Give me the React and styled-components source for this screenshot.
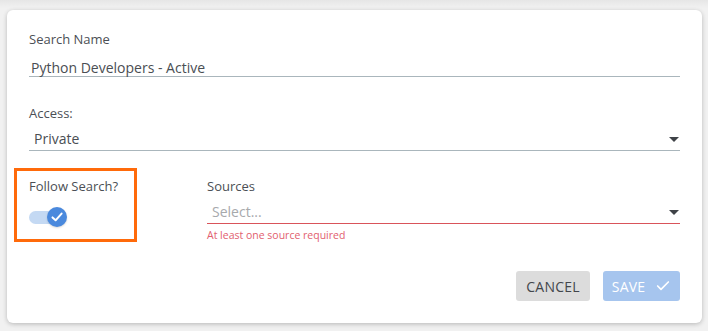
import React from "react";
import styled, { createGlobalStyle } from "styled-components";
import { Check } from "lucide-react";

const GlobalStyle = createGlobalStyle`
  html, body {
    margin: 0;
    padding: 0;
  }
  body {
    background: linear-gradient(#e6e6e6, #f1f1f1 8px) #f1f1f1;
    font-family: "Open Sans", "Liberation Sans", sans-serif;
  }
`;

const Card = styled.div`
  box-sizing: border-box;
  width: 695px;
  margin: 10px 6px 8px 7px;
  padding: 21px 22px 22px 22px;
  background: #fff;
  border-radius: 6px;
  box-shadow: 0 1px 4px rgba(0, 0, 0, 0.18), 0 2px 6px rgba(0, 0, 0, 0.06);
`;

const Field = styled.div`
  display: flex;
  flex-direction: column;
  margin-bottom: ${(p) => p.$gap || 0}px;
`;

const Label = styled.label`
  font-size: 13px;
  line-height: 16px;
  color: #4b4f55;
`;

const TextInput = styled.div`
  margin-top: 12px;
  padding-left: 2px;
  font-size: 14px;
  line-height: 17px;
  color: #4a4e53;
  border-bottom: 1px solid #aab6bc;
`;

const Select = styled.div`
  position: relative;
  margin-top: 8px;
  padding: 0 0 1px 5px;
  font-size: 14px;
  line-height: 20px;
  color: ${(p) => (p.$placeholder ? "#a7a9ac" : "#4a4e53")};
  border-bottom: 1px solid ${(p) => (p.$error ? "#d9545a" : "#aab6bc")};

  &::after {
    content: "";
    position: absolute;
    right: 1px;
    top: 8px;
    border-left: 5px solid transparent;
    border-right: 5px solid transparent;
    border-top: 5px solid #3f4247;
  }
`;

const ErrorText = styled.div`
  margin-top: 4px;
  font-size: 10.5px;
  line-height: 14px;
  color: #e2606e;
`;

const Row = styled.div`
  display: flex;
  align-items: flex-start;
  margin-top: 17px;
`;

const Highlight = styled.div`
  box-sizing: border-box;
  width: 123px;
  margin-left: -15px;
  padding: 7px 12px 12px 12px;
  border: 3px solid #ff6a0a;
  display: flex;
  flex-direction: column;
  gap: 13px;
`;

const Sources = styled.div`
  flex: 1;
  margin-left: 70px;
  padding-top: 10px;
  display: flex;
  flex-direction: column;
`;

const Switch = styled.div`
  position: relative;
  width: 34px;
  height: 20px;
  display: flex;
  align-items: center;
`;

const Track = styled.div`
  width: 32px;
  height: 13px;
  border-radius: 7px;
  background: #c4d9f3;
`;

const Knob = styled.div`
  position: absolute;
  left: 18px;
  top: 0;
  width: 20px;
  height: 20px;
  border-radius: 50%;
  background: #4a89dd;
  display: flex;
  align-items: center;
  justify-content: center;
  box-shadow: 0 1px 2px rgba(0, 0, 0, 0.15);
`;

const Actions = styled.div`
  display: flex;
  justify-content: flex-end;
  gap: 13px;
  margin-top: 29px;
`;

const Button = styled.button`
  box-sizing: border-box;
  height: 30px;
  width: ${(p) => p.$w}px;
  display: flex;
  align-items: center;
  justify-content: center;
  gap: 10px;
  border: none;
  border-radius: 3px;
  font-family: "Open Sans", "Liberation Sans", sans-serif;
  font-size: 14px;
  letter-spacing: 0.2px;
  text-transform: uppercase;
  background: ${(p) => (p.$primary ? "#a6c5ee" : "#dcdcdc")};
  color: ${(p) => (p.$primary ? "#ffffff" : "#43464b")};
  padding: 0;
`;

export default function App() {
  return (
    <>
      <GlobalStyle />
      <Card>
        <Field $gap={28}>
          <Label>Search Name</Label>
          <TextInput>Python Developers - Active</TextInput>
        </Field>
        <Field>
          <Label>Access:</Label>
          <Select>Private</Select>
        </Field>
        <Row>
          <Highlight>
            <Label>Follow Search?</Label>
            <Switch>
              <Track />
              <Knob>
                <svg width="14" height="14" viewBox="0 0 14 14">
                  <path
                    d="M2.5 7.4 L5.6 10.3 L11.6 3.6"
                    fill="none"
                    stroke="#fff"
                    strokeWidth="2"
                    strokeLinecap="round"
                    strokeLinejoin="round"
                  />
                </svg>
              </Knob>
            </Switch>
          </Highlight>
          <Sources>
            <Label>Sources</Label>
            <Select $error $placeholder>
              Select...
            </Select>
            <ErrorText>At least one source required</ErrorText>
          </Sources>
        </Row>
        <Actions>
          <Button $w={74}>Cancel</Button>
          <Button $w={77} $primary>
            Save
            <Check size={16} strokeWidth={2.5} color="#fff" />
          </Button>
        </Actions>
      </Card>
    </>
  );
}
